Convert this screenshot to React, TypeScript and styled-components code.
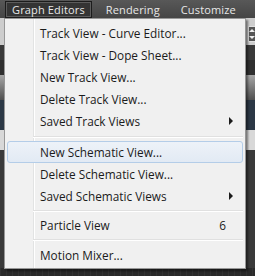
import React, { Fragment } from "react";
import styled, { createGlobalStyle } from "styled-components";

const GlobalStyle = createGlobalStyle`
    html, body {
        margin: 0;
        padding: 0;
        background: #3c3c3c;
    }
`;

const Screen = styled.div`
    position: relative;
    width: 255px;
    height: 276px;
    overflow: hidden;
    display: flex;
    flex-direction: column;
    font-family: "Open Sans", "Noto Sans", sans-serif;
`;

const MenuBar = styled.div`
    display: flex;
    align-items: center;
    gap: 7px;
    height: 18px;
    padding-left: 5px;
    background: linear-gradient(#585858, #454545);
`;

const BarItem = styled.div<{ active?: boolean }>`
    display: flex;
    align-items: center;
    height: 17px;
    padding: 0 6px;
    box-sizing: border-box;
    font-size: 11px;
    letter-spacing: 0.15px;
    color: #e8e8e8;
    border: 1px solid ${(p) => (p.active ? "#1c1c1c" : "transparent")};
    background: ${(p) => (p.active ? "#343434" : "transparent")};
    box-shadow: ${(p) => (p.active ? "inset 0 0 0 1px #5c5c5c" : "none")};
    white-space: nowrap;
`;

const Workspace = styled.div`
    flex: 1;
    display: flex;
    flex-direction: column;
`;

const Band = styled.div<{ h: number; bg: string }>`
    height: ${(p) => p.h}px;
    background: ${(p) => p.bg};
`;

const Grid = styled.div`
    flex: 1;
    background-color: #2a2a2a;
    background-image: linear-gradient(90deg, #333 1px, transparent 1px);
    background-size: 6px 6px;
`;

const Spinner = styled.div`
    position: absolute;
    left: 248px;
    top: 26px;
    width: 8px;
    height: 16px;
    box-sizing: border-box;
    border: 1px solid #e0e0e0;
    background: #555;
    display: flex;
    flex-direction: column;
    align-items: center;
    justify-content: space-around;
    &::before, &::after {
        content: "";
        width: 0;
        height: 0;
        border-left: 3px solid transparent;
        border-right: 3px solid transparent;
    }
    &::before { border-bottom: 3px solid #eee; }
    &::after { border-top: 3px solid #eee; }
`;

const Dropdown = styled.div`
    position: absolute;
    left: 4px;
    top: 18px;
    width: 242px;
    box-sizing: border-box;
    padding: 3px 2px 2px 2px;
    border: 1px solid #979797;
    background: linear-gradient(
        90deg,
        #f1f1f1 28px,
        #e2e3e3 28px,
        #e2e3e3 29px,
        #ffffff 29px,
        #ffffff 30px,
        #f0f0f0 30px
    );
    box-shadow: 2px 2px 2px rgba(0, 0, 0, 0.45);
    display: flex;
    flex-direction: column;
`;

const Item = styled.div<{ hover?: boolean }>`
    position: relative;
    display: flex;
    align-items: center;
    height: 22px;
    padding: 0 8px 0 32px;
    box-sizing: border-box;
    font-size: 11.8px;
    color: #1b1b1b;
    border: 1px solid ${(p) => (p.hover ? "#b4cde8" : "transparent")};
    border-radius: 3px;
    background: ${(p) => (p.hover ? "linear-gradient(#edf2f8, #e2eaf4)" : "transparent")};
    white-space: nowrap;
`;

const Label = styled.span`
    flex: 1;
`;

const Shortcut = styled.span`
    margin-right: 8px;
`;

const Arrow = styled.span`
    width: 0;
    height: 0;
    border-top: 4px solid transparent;
    border-bottom: 4px solid transparent;
    border-left: 4px solid #1b1b1b;
    margin-right: 1px;
`;

const Separator = styled.div<{ h?: number }>`
    height: ${(p) => p.h ?? 8}px;
    display: flex;
    align-items: center;
    padding-left: 26px;
    &::after {
        content: "";
        flex: 1;
        height: 1px;
        background: #e0e0e0;
        border-bottom: 1px solid #ffffff;
    }
`;

type Entry =
    | { sep: true; h?: number }
    | { sep?: false; label: string; sub?: boolean; key?: string; hover?: boolean };

const entries: Entry[] = [
    { label: "Track View - Curve Editor..." },
    { label: "Track View - Dope Sheet..." },
    { label: "New Track View..." },
    { label: "Delete Track View..." },
    { label: "Saved Track Views", sub: true },
    { sep: true, h: 9 },
    { label: "New Schematic View...", hover: true },
    { label: "Delete Schematic View..." },
    { label: "Saved Schematic Views", sub: true },
    { sep: true, h: 7 },
    { label: "Particle View", key: "6" },
    { sep: true },
    { label: "Motion Mixer..." },
];

const App = () => {
    return (
        <Fragment>
            <GlobalStyle />
            <Screen>
                <MenuBar>
                    <BarItem active>Graph Editors</BarItem>
                    <BarItem>Rendering</BarItem>
                    <BarItem>Customize</BarItem>
                </MenuBar>
                <Workspace>
                    <Band h={27} bg="#cdcdcd" />
                    <Band h={15} bg="#3a3a3a" />
                    <Band h={15} bg="#2f2f2f" />
                    <Band h={25} bg="linear-gradient(#a6a6a6, #505050)" />
                    <Band h={30} bg="#2c3846" />
                    <Band h={20} bg="#d8d8d8" />
                    <Band h={118} bg="#3a3a3a" />
                    <Grid />
                </Workspace>
                <Spinner />
                <Dropdown>
                    {entries.map((e, i) =>
                        e.sep ? (
                            <Separator key={i} h={e.h} />
                        ) : (
                            <Item key={i} hover={e.hover}>
                                <Label>{e.label}</Label>
                                {e.key ? <Shortcut>{e.key}</Shortcut> : null}
                                {e.sub ? <Arrow /> : null}
                            </Item>
                        )
                    )}
                </Dropdown>
            </Screen>
        </Fragment>
    );
};

export default App;
